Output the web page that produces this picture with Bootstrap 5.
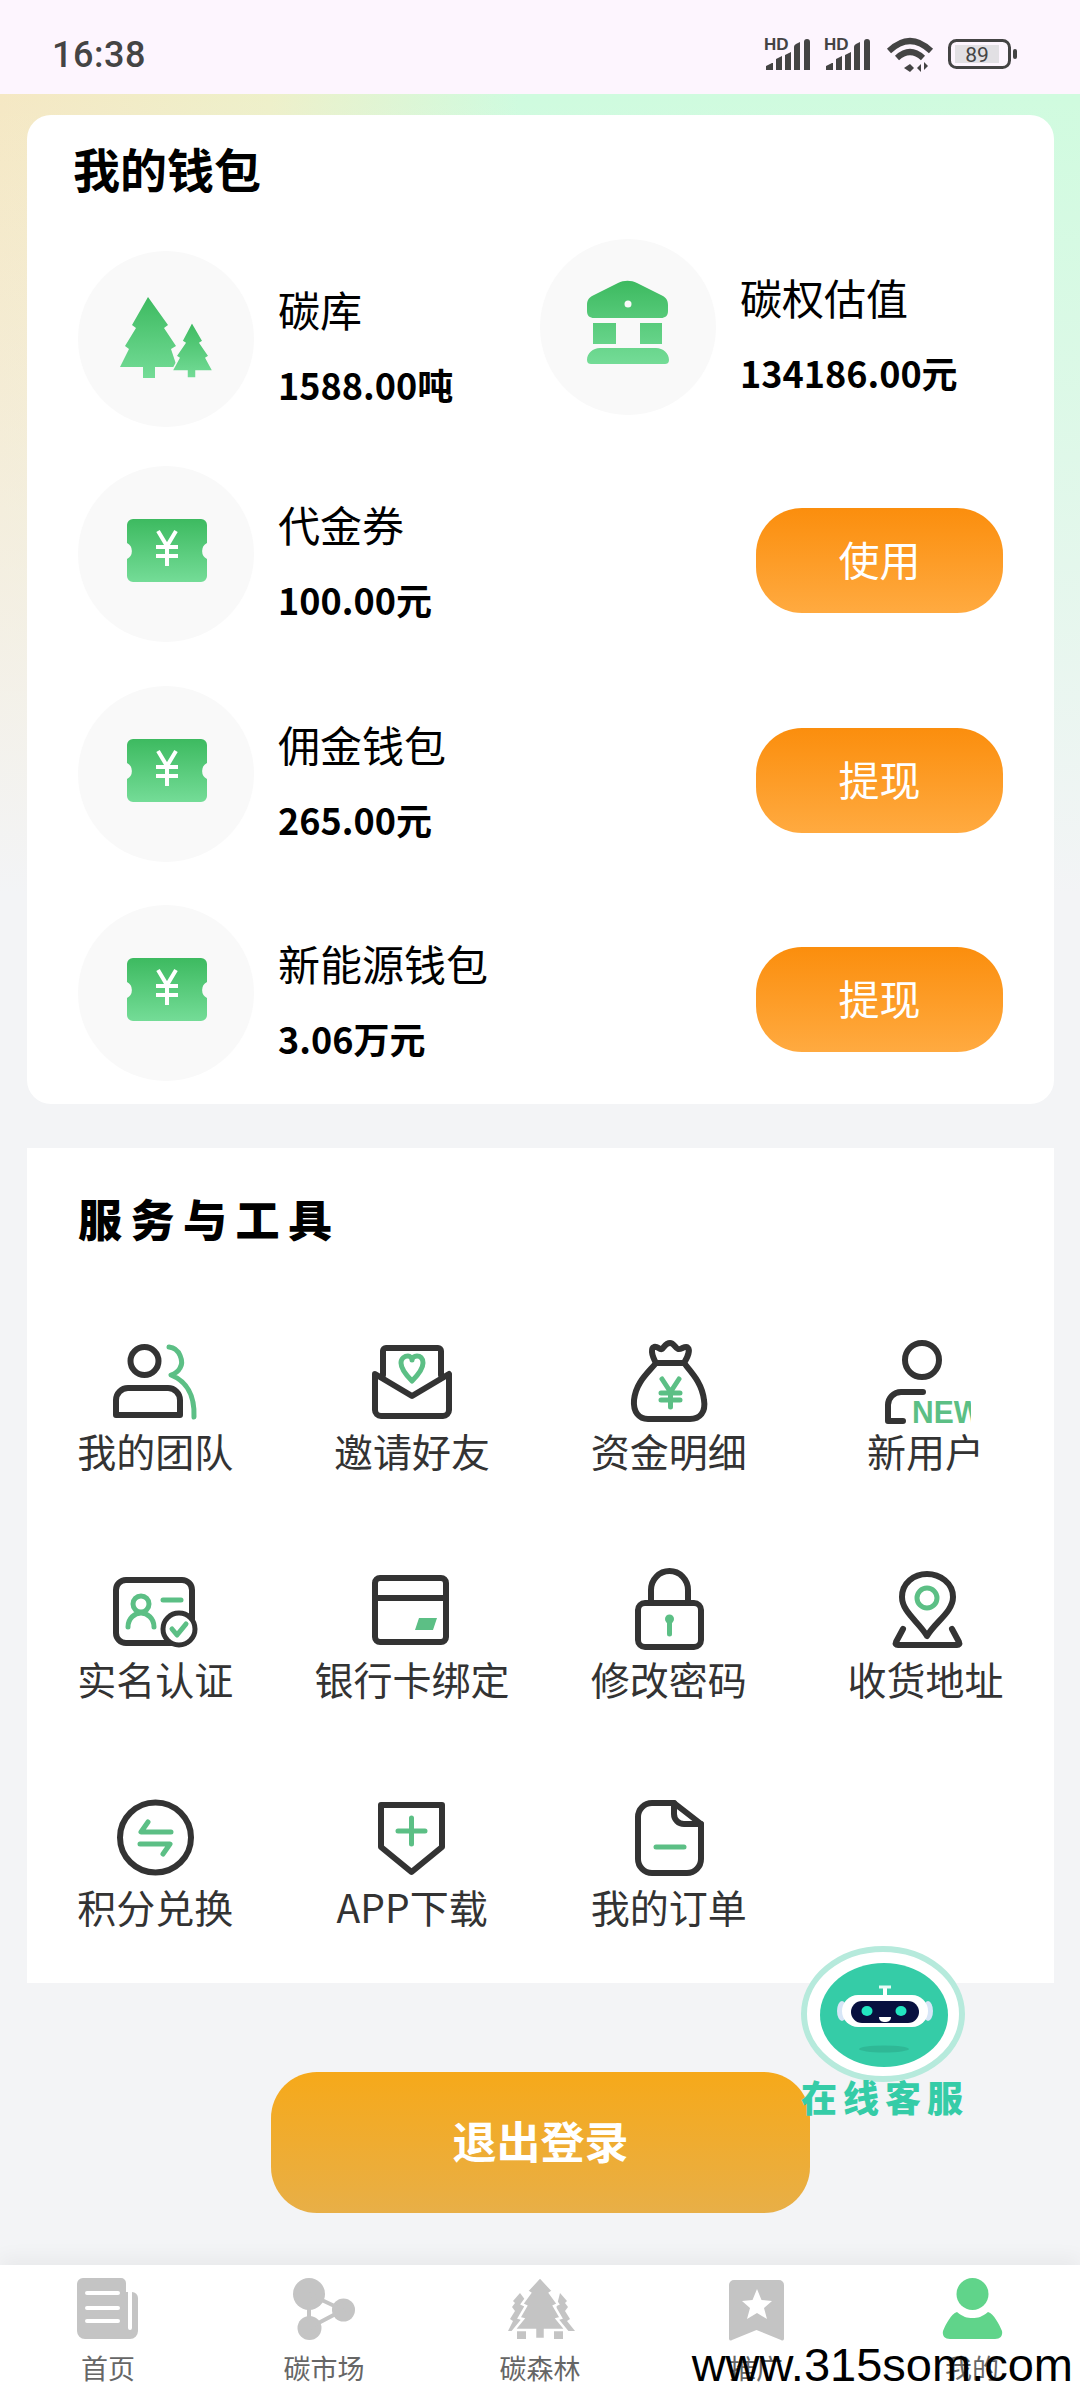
<!DOCTYPE html>
<html lang="zh-CN">
<head>
    <meta charset="UTF-8">
    <title>我的</title>
    <link href="https://cdn.jsdelivr.net/npm/bootstrap@5.3.3/dist/css/bootstrap.min.css" rel="stylesheet">
    <style>
        html, body { width: 1080px; height: 2400px; overflow: hidden; }
        body { font-family: "Noto Sans CJK SC", "Liberation Sans", sans-serif; background: #f3f4f6; color: #000; }
        svg { display: block; }
        .svg-defs { width: 0; height: 0; position: absolute; }

        .status-bar { height: 94px; background: #fdf5fe; padding: 16px 62px 0 52px; color: #444; }
        .status-time { font-family: Roboto, sans-serif; font-size: 36px; font-weight: 500; line-height: 1; letter-spacing: .5px; }

        .page-main { background: linear-gradient(180deg, rgba(243,244,246,0) 0, rgba(243,244,246,.35) 300px, #f3f4f6 800px), linear-gradient(90deg, #f5e8c4 0, #eef0ca 25%, #cffbdf 48%, #d0fbdf 100%); padding: 21px 26px 0 27px; }

        .wallet-box { height: 989px; background: #fff; border-radius: 24px; padding: 23px 51px 0 46px; }
        .wallet-title { font-size: 47px; font-weight: 700; line-height: 60px; }
        .wallet-row { padding-left: 5px; }
        .wallet-first { margin-top: 41px; }
        .wallet-a { width: 462px; margin-top: 12px; }
        .wallet-pic { width: 176px; height: 176px; flex: none; border-radius: 50%; background: #f9f9f9; }
        .wallet-text { margin: 33px 0 0 24px; }
        .wallet-name { font-size: 42px; line-height: 50px; }
        .wallet-val { font-size: 36px; font-weight: 700; line-height: 50px; margin-top: 25px; white-space: nowrap; }
        .wallet-btn { width: 247px; height: 105px; margin-top: 42px; padding: 0 0 4px; border: 0; border-radius: 46px; background: linear-gradient(180deg, #fb8e0d, #ffaa40); color: #fff; font-size: 41px; line-height: 1; }
        .gap-r3 { margin-top: 44px; }
        .gap-r4 { margin-top: 43px; }
        .gap-r2 { margin-top: 39px; }

        .tools-box { background: #fff; margin-top: 44px; height: 835px; padding-top: 40px; }
        .tools-title { font-size: 44px; font-weight: 900; line-height: 60px; letter-spacing: 8.5px; padding-left: 51px; margin-bottom: 90px; }
        .tool-item { height: 138px; margin-bottom: 90px; text-align: center; }
        .tool-pic { width: 90px; height: 90px; margin: 0 auto; overflow: hidden; }
        .tool-name { font-size: 39px; line-height: 44px; color: #333; white-space: nowrap; }
        .s-dark { fill: none; stroke: #333; stroke-width: 6; stroke-linejoin: round; stroke-linecap: round; }
        .s-green { fill: none; stroke: #5cbf85; stroke-width: 5; stroke-linejoin: round; stroke-linecap: round; }

        .logout-btn { display: block; width: 539px; height: 141px; margin: 89px auto 0; padding: 0 0 6px; border: 0; border-radius: 46px; background: linear-gradient(180deg, #f6a91a, #e8af47); color: #fff; font-size: 44px; font-weight: 700; }

        .robot-float { position: absolute; left: 801px; top: 1946px; width: 170px; }
        .robot-text { font-size: 36px; font-weight: 900; line-height: 32px; letter-spacing: 6px; color: #35cca7; white-space: nowrap; margin-top: -2px; }

        .bottom-nav { height: 135px; background: #fff; box-shadow: 0 -8px 18px rgba(0,0,0,.045); position: relative; padding-top: 12px; }
        .nav-pic { width: 70px; height: 64px; margin: 0 auto; }
        .nav-name { font-size: 27px; line-height: 28px; margin-top: 13px; color: #666; }
        .watermark { position: absolute; right: 7px; top: 77px; font-family: "Liberation Sans", Arial, sans-serif; font-size: 47px; line-height: 46px; color: #000; white-space: nowrap; }
    </style>
</head>
<body class="d-flex flex-column position-relative">

<!-- 공용 그라데이션 / 심볼 -->
<svg class="svg-defs">
    <defs>
        <linearGradient id="gGreen" x1="0" y1="0" x2="0" y2="1">
            <stop offset="0" stop-color="#3dba60"/>
            <stop offset="1" stop-color="#74dc97"/>
        </linearGradient>
        <symbol id="voucher" viewBox="0 0 176 176">
            <path fill="url(#gGreen)" d="M55 53H123a6 6 0 0 1 6 6V77a9 9 0 0 0 0 16V110a6 6 0 0 1-6 6H55a6 6 0 0 1-6-6V93a9 9 0 0 0 0-16V59a6 6 0 0 1 6-6Z"/>
            <path fill="none" stroke="#fff" stroke-width="4" d="M80 65L89 80L98 65M89 80V100M78 81H100M78 90H100"/>
        </symbol>
    </defs>
</svg>

<!-- 상태바 -->
<div class="status-bar d-flex align-items-center justify-content-between">
    <span class="status-time">16:38</span>
    <svg width="254" height="50" viewBox="764 30 254 50">
        <g fill="#444">
            <text x="764" y="50" font-family="Liberation Sans" font-weight="700" font-size="17">HD</text>
            <path d="M766 70V66l6-3h1v7ZM776 70V59l6-3v14ZM785 70V55l6-3v18ZM794 70V47q0-2 2-3l4-2v28ZM804 70V42q0-3 3-3t3 3V70Z"/>
            <text x="824" y="50" font-family="Liberation Sans" font-weight="700" font-size="17">HD</text>
            <path d="M826 70V66l6-3h1v7ZM836 70V59l6-3v14ZM845 70V55l6-3v18ZM854 70V47q0-2 2-3l4-2v28ZM864 70V42q0-3 3-3t3 3V70Z"/>
        </g>
        <g fill="none" stroke="#444" stroke-width="6">
            <path d="M889 51Q910 31 931 51"/>
            <path d="M897 58Q910 46 923 58"/>
        </g>
        <path fill="#444" d="M910 64l-6 4 6 4 4-4ZM921 72v-8l-4 4ZM924 62v8l4-4Z"/>
        <rect x="949.500" y="40.500" width="60" height="27" rx="7" fill="none" stroke="#444" stroke-width="3"/>
        <rect x="955" y="45" width="44" height="18" fill="#e2e0e4"/>
        <rect x="1013" y="49" width="4" height="10" rx="2" fill="#444"/>
        <text x="977" y="62" text-anchor="middle" font-family="Roboto" font-size="21" fill="#444">89</text>
    </svg>
</div>

<div class="page-main">
    <!-- 我的钱包 -->
    <div class="wallet-box">
        <div class="wallet-title">我的钱包</div>

        <div class="wallet-row wallet-first d-flex align-items-start">
            <div class="wallet-a d-flex align-items-start">
                <div class="wallet-pic">
                    <svg width="176" height="176" viewBox="0 0 176 176">
                        <polygon fill="url(#gGreen)" points="70,46 90,74 86,77 98,95 93,98 99,116 77,116 77,127 65,127 65,116 42,116 51,98 47,95 58,77 54,74"/>
                        <polygon fill="url(#gGreen)" stroke="#f9f9f9" stroke-width="1.500" points="114,71 125,90 122,92 131,105 128,107 135,120 118,120 118,127 109,127 109,120 94,120 101,107 98,105 107,92 104,90"/>
                    </svg>
                </div>
                <div class="wallet-text">
                    <div class="wallet-name">碳库</div>
                    <div class="wallet-val">1588.00吨</div>
                </div>
            </div>
            <div class="d-flex align-items-start">
                <div class="wallet-pic">
                    <svg width="176" height="176" viewBox="0 0 176 176">
                        <path fill="url(#gGreen)" d="M47 66C47 60 50 58 54 56L78 44C84 41 91 41 97 44L121 56C125 58 128 60 128 66V72C128 77 125 79 121 79H54C50 79 47 77 47 72ZM53 84H76V105H53ZM100 84H122V105H100ZM47 121C47 114 53 109 60 109H116C123 109 129 114 129 121C129 124 127 125 125 125H51C49 125 47 124 47 121Z"/>
                        <circle cx="88" cy="65" r="3.500" fill="#f9f9f9"/>
                    </svg>
                </div>
                <div class="wallet-text">
                    <div class="wallet-name">碳权估值</div>
                    <div class="wallet-val">134186.00元</div>
                </div>
            </div>
        </div>

        <div class="wallet-row gap-r2 d-flex align-items-start">
            <div class="wallet-pic"><svg width="176" height="176"><use href="#voucher"/></svg></div>
            <div class="wallet-text flex-grow-1">
                <div class="wallet-name">代金券</div>
                <div class="wallet-val">100.00元</div>
            </div>
            <button class="btn wallet-btn">使用</button>
        </div>

        <div class="wallet-row gap-r3 d-flex align-items-start">
            <div class="wallet-pic"><svg width="176" height="176"><use href="#voucher"/></svg></div>
            <div class="wallet-text flex-grow-1">
                <div class="wallet-name">佣金钱包</div>
                <div class="wallet-val">265.00元</div>
            </div>
            <button class="btn wallet-btn">提现</button>
        </div>

        <div class="wallet-row gap-r4 d-flex align-items-start">
            <div class="wallet-pic"><svg width="176" height="176"><use href="#voucher"/></svg></div>
            <div class="wallet-text flex-grow-1">
                <div class="wallet-name">新能源钱包</div>
                <div class="wallet-val">3.06万元</div>
            </div>
            <button class="btn wallet-btn">提现</button>
        </div>
    </div>

    <!-- 服务与工具 -->
    <div class="tools-box">
        <div class="tools-title">服务与工具</div>
        <div class="row g-0">
            <div class="col-3 tool-item">
                <svg class="tool-pic" viewBox="0 0 90 90">
                    <circle class="s-dark" cx="34.500" cy="23" r="14"/>
                    <path class="s-dark" d="M6 77V62a12 12 0 0 1 12-12H58a12 12 0 0 1 12 12V77Z"/>
                    <path class="s-green" stroke-width="4" d="M59 9C70 10 74 24 70 30C68 34 64 36 61 37C73 42 85 52 84 79"/>
                </svg>
                <div class="tool-name">我的团队</div>
            </div>
            <div class="col-3 tool-item">
                <svg class="tool-pic" viewBox="0 0 90 90">
                    <path class="s-dark" d="M16 37V13a3 3 0 0 1 3-3H71a3 3 0 0 1 3 3V37"/>
                    <path class="s-dark" d="M8 36L45 58L82 36V72a6 6 0 0 1-6 6H14a6 6 0 0 1-6-6Z"/>
                    <path class="s-green" stroke-width="4" d="M45 43C38 36 34 30 34 25C34 20 38 18 41 18C43 18 45 20 45 22C45 20 47 18 50 18C53 18 56 20 56 25C56 30 52 36 45 43Z"/>
                </svg>
                <div class="tool-name">邀请好友</div>
            </div>
            <div class="col-3 tool-item">
                <svg class="tool-pic" viewBox="0 0 90 90">
                    <path class="s-dark" d="M32 25C27 16 27 10 30 9C34 8 35 12 38 11C40 9 42 5 46 5C50 5 51 10 54 11C57 12 60 8 63 9C66 11 65 17 60 25Z"/>
                    <path class="s-dark" d="M32 25C24 35 12 44 10 62C9 74 15 81 24 81H66C76 81 82 74 80 62C78 45 68 35 60 25"/>
                    <path class="s-green" stroke-width="3.500" d="M38 41L46.500 54L55 41M46.500 54V69M37 55H56M37 62H56"/>
                </svg>
                <div class="tool-name">资金明细</div>
            </div>
            <div class="col-3 tool-item">
                <svg class="tool-pic" viewBox="0 0 90 90">
                    <circle class="s-dark" cx="41" cy="22" r="17"/>
                    <path class="s-dark" stroke-width="7" stroke-linecap="butt" d="M42 54H20a13 13 0 0 0-13 13V83H22"/>
                    <text x="31" y="85" font-family="Liberation Sans" font-weight="700" font-size="31" fill="#5cbf85" textLength="70" lengthAdjust="spacingAndGlyphs">NEW</text>
                </svg>
                <div class="tool-name">新用户</div>
            </div>

            <div class="col-3 tool-item">
                <svg class="tool-pic" viewBox="0 0 90 90">
                    <rect class="s-dark" x="6" y="14" width="76" height="63" rx="10"/>
                    <circle class="s-green" stroke-width="4" cx="31" cy="38" r="8"/>
                    <path class="s-green" stroke-width="4" d="M18 61C18 52 25 47 31 47C37 47 44 52 44 61"/>
                    <path class="s-green" stroke-width="5" d="M53 34H71"/>
                    <circle cx="69" cy="63" r="16" fill="#fff" stroke="#333" stroke-width="5"/>
                    <path class="s-green" stroke-width="4" d="M62 63L67 69L76 58"/>
                </svg>
                <div class="tool-name">实名认证</div>
            </div>
            <div class="col-3 tool-item">
                <svg class="tool-pic" viewBox="0 0 90 90">
                    <rect class="s-dark" x="8" y="12" width="71" height="64" rx="5"/>
                    <path class="s-dark" d="M8 32H79"/>
                    <polygon fill="#5cbf85" points="52,52 70,52 66,64 48,64"/>
                </svg>
                <div class="tool-name">银行卡绑定</div>
            </div>
            <div class="col-3 tool-item">
                <svg class="tool-pic" viewBox="0 0 90 90">
                    <rect class="s-dark" x="14" y="37" width="63" height="44" rx="7"/>
                    <path class="s-dark" d="M27 36V24a18.500 19 0 0 1 37 0V36"/>
                    <circle cx="45.500" cy="53" r="4.500" fill="#5cbf85"/>
                    <path class="s-green" stroke-width="3.500" d="M45.500 54V68"/>
                </svg>
                <div class="tool-name">修改密码</div>
            </div>
            <div class="col-3 tool-item">
                <svg class="tool-pic" viewBox="0 0 90 90">
                    <path class="s-dark" stroke-width="5" d="M46 70C38 56 21 46 21 31C21 17 33 8 46 8C59 8 72 17 72 31C72 46 54 56 46 70Z"/>
                    <circle class="s-green" cx="46" cy="32" r="10"/>
                    <path class="s-dark" stroke-width="5" d="M22 63L15 76C14 78 15 79 17 79H76C78 79 79 78 78 76L71 63"/>
                </svg>
                <div class="tool-name">收货地址</div>
            </div>

            <div class="col-3 tool-item">
                <svg class="tool-pic" viewBox="0 0 90 90">
                    <ellipse class="s-dark" stroke-width="5" cx="45.500" cy="43.500" rx="35.500" ry="35"/>
                    <path class="s-green" stroke-width="4.500" d="M38 28L31 38H61M53 60L60 50H30"/>
                </svg>
                <div class="tool-name">积分兑换</div>
            </div>
            <div class="col-3 tool-item">
                <svg class="tool-pic" viewBox="0 0 90 90">
                    <path class="s-dark" d="M14 11H75V53L44.500 78L14 53Z"/>
                    <path class="s-green" stroke-width="6" stroke-linecap="butt" d="M44.500 24V50M31 37H58"/>
                </svg>
                <div class="tool-name">APP下载</div>
            </div>
            <div class="col-3 tool-item">
                <svg class="tool-pic" viewBox="0 0 90 90">
                    <path class="s-dark" d="M50 9H28a14 14 0 0 0-14 14V65a14 14 0 0 0 14 14H63a14 14 0 0 0 14-14V30Z"/>
                    <path class="s-dark" d="M50 9V20a10 10 0 0 0 10 10H77"/>
                    <path class="s-green" stroke-width="6" d="M32 53H60"/>
                </svg>
                <div class="tool-name">我的订单</div>
            </div>
        </div>
    </div>

    <button class="btn logout-btn">退出登录</button>
</div>

<!-- 在线客服 -->
<div class="robot-float">
    <svg width="164" height="136" viewBox="0 0 164 136">
        <ellipse cx="82" cy="68" rx="79" ry="65" fill="#fff" stroke="#b6eadc" stroke-width="6"/>
        <ellipse cx="83" cy="69" rx="64" ry="52" fill="#35cca7"/>
        <path d="M84 42V50" stroke="#fff" stroke-width="4"/>
        <path d="M78 41H90" stroke="#e8fbf6" stroke-width="3"/>
        <ellipse cx="41" cy="65" rx="5" ry="10" fill="#d7e6f7"/>
        <ellipse cx="127" cy="65" rx="5" ry="10" fill="#d7e6f7"/>
        <rect x="41" y="49" width="86" height="32" rx="16" fill="#fff"/>
        <rect x="50" y="55" width="68" height="22" rx="11" fill="#08103f"/>
        <ellipse cx="66" cy="65" rx="5.500" ry="5" fill="#22e6c0"/>
        <ellipse cx="100" cy="65" rx="5.500" ry="5" fill="#22e6c0"/>
        <path d="M78 71H90C90 75 87 76 84 76C81 76 78 75 78 71Z" fill="#fff"/>
        <ellipse cx="83" cy="103" rx="25" ry="3.500" fill="#2fb896"/>
    </svg>
    <div class="robot-text">在线客服</div>
</div>

<!-- 하단 탭 -->
<nav class="bottom-nav mt-auto row g-0 flex-nowrap">
    <div class="col text-center">
        <svg class="nav-pic" viewBox="0 0 70 64">
            <path fill="#c4c4c4" d="M10 1H48a5 5 0 0 1 5 5V15H59a6 6 0 0 1 6 6V54a8 8 0 0 1-8 8H12a8 8 0 0 1-8-8V7a6 6 0 0 1 6-6Z"/>
            <path fill="none" stroke="#fff" stroke-width="4" stroke-linecap="round" d="M57 14V51M14 16H45M14 31H45M14 44H45"/>
        </svg>
        <div class="nav-name">首页</div>
    </div>
    <div class="col text-center">
        <svg class="nav-pic" viewBox="0 0 70 64">
            <g fill="#c4c4c4">
                <circle cx="20" cy="17" r="16"/>
                <circle cx="54.500" cy="33" r="11.500"/>
                <circle cx="20.500" cy="51" r="12"/>
            </g>
            <path fill="none" stroke="#c4c4c4" stroke-width="4" d="M20 17L54 33L20 51Z"/>
        </svg>
        <div class="nav-name">碳市场</div>
    </div>
    <div class="col text-center">
        <svg class="nav-pic" viewBox="0 0 70 64">
            <g fill="#c4c4c4">
                <polygon points="15,16 21,24 18,26 21,34 15,42 19,44 14,52 21,54 21,62 12,62 12,54 3,54 8,44 5,42 10,34 7,30 10,26 8,24"/>
                <polygon points="55,16 62,24 60,26 63,30 60,34 65,42 62,44 70,54 58,54 58,62 49,62 49,54 49,40"/>
            </g>
            <polygon fill="#c4c4c4" stroke="#fff" stroke-width="2.500" points="35,0 48,14 45,16 53,27 49,29 56,41 52,42 61,53 40,53 40,62 30,62 30,53 9,53 18,42 14,41 21,29 17,27 25,16 22,14"/>
        </svg>
        <div class="nav-name">碳森林</div>
    </div>
    <div class="col text-center">
        <svg class="nav-pic" viewBox="0 0 70 64">
            <path fill="#c4c4c4" d="M13 3H58a5 5 0 0 1 5 5V62a2 2 0 0 1-3 1L35.500 53L11 63a2 2 0 0 1-3-1V8a5 5 0 0 1 5-5Z"/>
            <polygon fill="#fff" points="36,12 40.500,23 51,24 43,31 46,42 36,36 26,42 29,31 21,24 31.500,23"/>
        </svg>
        <div class="nav-name">推广</div>
    </div>
    <div class="col text-center">
        <svg class="nav-pic" viewBox="0 0 70 64">
            <g fill="#60d48a">
                <circle cx="35.500" cy="17" r="16"/>
                <path d="M20 35C26 40 30 41 35.500 41C41 41 45 40 51 35C57 37 62 47 65 54C66 59 63 62 58 62H13C8 62 5 59 6 54C9 47 14 37 20 35Z"/>
            </g>
        </svg>
        <div class="nav-name">我的</div>
    </div>
    <div class="watermark w-auto p-0">www.315som.com</div>
</nav>

<script src="https://cdn.jsdelivr.net/npm/bootstrap@5.3.3/dist/js/bootstrap.bundle.min.js"></script>
</body>
</html>
